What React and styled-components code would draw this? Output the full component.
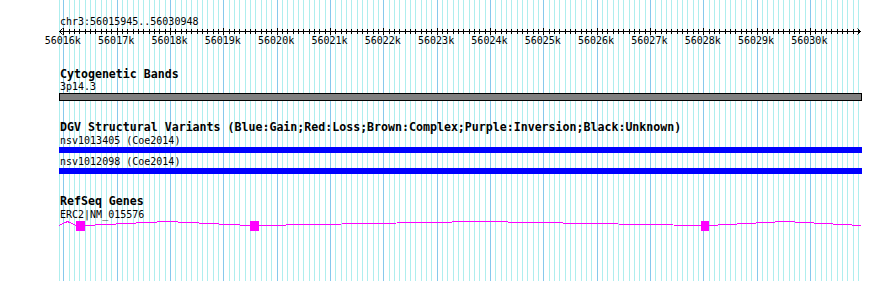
import React from 'react';
import styled, { createGlobalStyle } from 'styled-components';

const START = 56015945;
const END = 56030948;
const X0 = 60.4;
const SCALE = 800 / (END - START);
const px = (bp) => X0 + (bp - START) * SCALE;

const Global = createGlobalStyle`
  html, body { margin: 0; padding: 0; background: #ffffff; }
  body { font-family: "DejaVu Sans Mono", "Liberation Mono", monospace; color: #000; }
`;

const Panel = styled.div`
  position: relative;
  width: 890px;
  height: 281px;
  overflow: hidden;
  background: #ffffff;
`;

const GridLayer = styled.svg`
  position: absolute;
  left: 0;
  top: 0;
  z-index: 0;
`;

const Content = styled.div`
  position: relative;
  z-index: 1;
  display: flex;
  flex-direction: column;
`;

const PosLabel = styled.div`
  margin-top: 15px;
  padding-left: 60px;
  font-size: 10px;
  line-height: 13px;
  height: 13px;
  white-space: pre;
`;

const Drawing = styled.svg`
  display: block;
  overflow: visible;
`;

const Track = styled.section`
  display: flex;
  flex-direction: column;
  margin-top: ${(p) => p.$gap}px;
`;

const TrackTitle = styled.div`
  padding-left: 60px;
  font-weight: bold;
  font-size: 11.6px;
  line-height: 12px;
  height: 12px;
  white-space: pre;
`;

const FeatureLabel = styled.div`
  padding-left: 60px;
  margin-top: ${(p) => p.$gap || 0}px;
  font-size: 10px;
  line-height: 13px;
  height: 13px;
  white-space: pre;
`;

const Bar = styled.div`
  margin-left: 59px;
  width: 803px;
  height: ${(p) => p.$h}px;
  box-sizing: border-box;
  background: ${(p) => p.$color};
  border: ${(p) => (p.$border ? '1px solid #000' : 'none')};
`;

function Grid() {
  const lines = [{ x: 59, major: false }];
  for (let bp = 56016000; bp <= 56030900; bp += 100) {
    lines.push({ x: Math.round(px(bp)), major: bp % 1000 === 0 });
  }
  return (
    <GridLayer width="890" height="281" shapeRendering="crispEdges">
      {lines.map((l, i) => (
        <rect key={i} x={l.x} y={0} width={1} height={281} fill={l.major ? '#87c8ec' : '#aeeeee'} />
      ))}
    </GridLayer>
  );
}

function Ruler() {
  const ticks = [];
  for (let bp = 56016000; bp <= 56030900; bp += 100) {
    const x = Math.round(px(bp)) + 0.5;
    const major = bp % 1000 === 0;
    ticks.push(<line key={bp} x1={x} x2={x} y1={major ? 0 : 1} y2={major ? 7 : 6} stroke="#000" />);
  }
  const labels = [];
  for (let k = 56016; k <= 56030; k++) {
    labels.push(
      <text key={k} x={px(k * 1000) - 0.5} y={15.5} textAnchor="middle" fontSize="10" fontFamily='"DejaVu Sans Mono", monospace' fill="#000">
        {k}k
      </text>
    );
  }
  return (
    <Drawing width="890" height="20">
      <g shapeRendering="crispEdges">
        <line x1={59} x2={861} y1={3.5} y2={3.5} stroke="#000" />
        {ticks}
      </g>
      <polyline points="62.5,0.5 59.5,3.5 62.5,6.5" fill="none" stroke="#000" />
      <polyline points="857.5,0.5 860.5,3.5 857.5,6.5" fill="none" stroke="#000" />
      {labels}
    </Drawing>
  );
}

function GeneModel() {
  const exons = [
    [76, 85],
    [250, 259],
    [701, 709],
  ];
  const hats = [
    [59, 76],
    [85, 250],
    [259, 701],
    [709, 861],
  ];
  return (
    <Drawing width="890" height="12" shapeRendering="crispEdges">
      {hats.map(([a, b], i) => (
        <polyline
          key={i}
          points={`${a},4.5 ${(a + b) / 2},0.5 ${b},4.5`}
          fill="none"
          stroke="#ff00ff"
          strokeWidth="1"
        />
      ))}
      {exons.map(([a, b], i) => (
        <rect key={i} x={a} y={0} width={b - a} height={10} fill="#ff00ff" />
      ))}
    </Drawing>
  );
}

export default function App() {
  return (
    <>
      <Global />
      <Panel>
        <Grid />
        <Content>
          <PosLabel>chr3:56015945..56030948</PosLabel>
          <Ruler />
          <Track $gap={20}>
            <TrackTitle>Cytogenetic Bands</TrackTitle>
            <FeatureLabel>3p14.3</FeatureLabel>
            <Bar $h={8} $color="#808080" $border />
          </Track>
          <Track $gap={20}>
            <TrackTitle>DGV Structural Variants (Blue:Gain;Red:Loss;Brown:Complex;Purple:Inversion;Black:Unknown)</TrackTitle>
            <FeatureLabel $gap={1}>nsv1013405 (Coe2014)</FeatureLabel>
            <Bar $h={6} $color="#0000ff" />
            <FeatureLabel $gap={2}>nsv1012098 (Coe2014)</FeatureLabel>
            <Bar $h={6} $color="#0000ff" />
          </Track>
          <Track $gap={21}>
            <TrackTitle>RefSeq Genes</TrackTitle>
            <FeatureLabel $gap={1}>ERC2|NM_015576</FeatureLabel>
            <GeneModel />
          </Track>
        </Content>
      </Panel>
    </>
  );
}
